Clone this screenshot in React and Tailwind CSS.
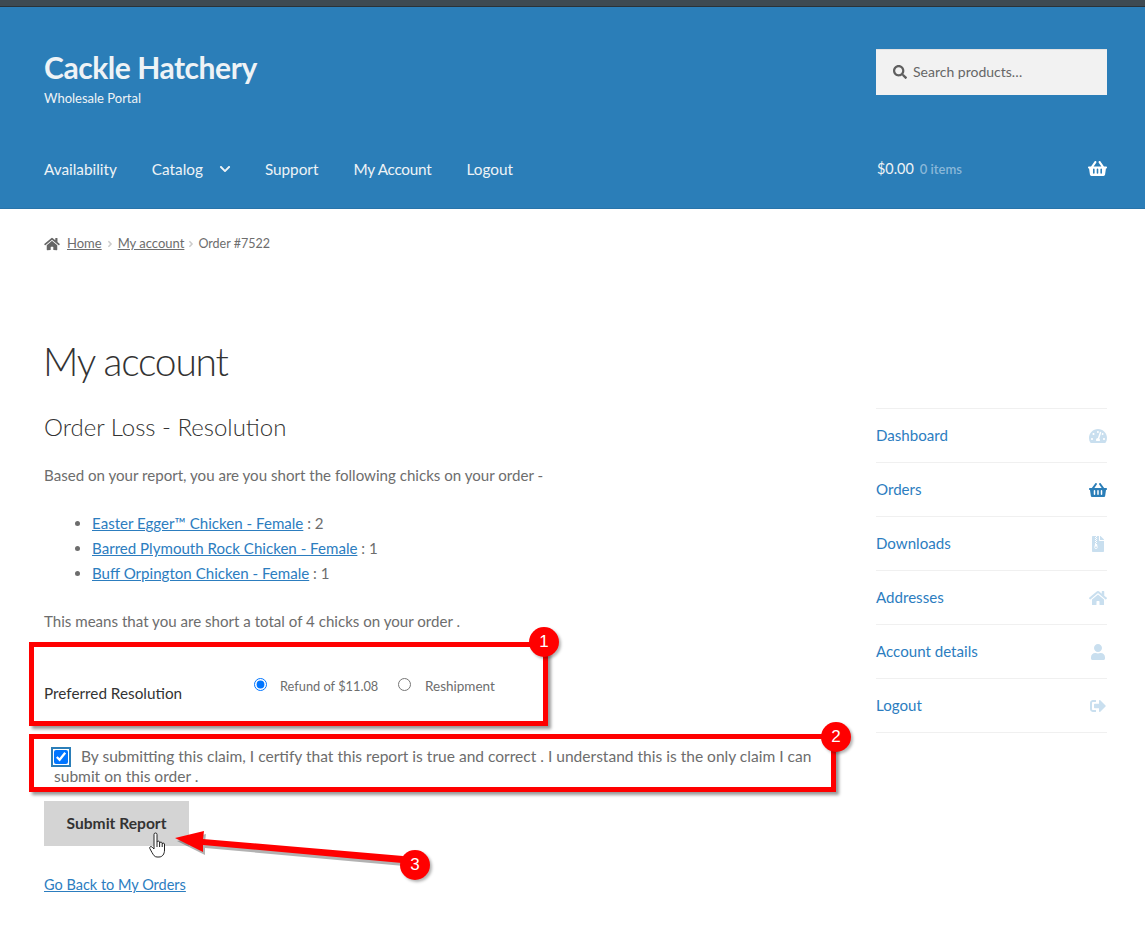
import React from 'react';
import { FaHome, FaSearch, FaShoppingBasket, FaTachometerAlt, FaFileArchive, FaUser, FaSignOutAlt, FaChevronDown, FaAngleRight } from 'react-icons/fa';

const navLinks = ['Availability', 'Catalog', 'Support', 'My Account', 'Logout'];

const accountLinks = [
  { name: 'Dashboard', Icon: FaTachometerAlt },
  { name: 'Orders', Icon: FaShoppingBasket, active: true },
  { name: 'Downloads', Icon: FaFileArchive },
  { name: 'Addresses', Icon: FaHome },
  { name: 'Account details', Icon: FaUser },
  { name: 'Logout', Icon: FaSignOutAlt },
];

const chicks = [
  { name: 'Easter Egger™ Chicken - Female', qty: 2 },
  { name: 'Barred Plymouth Rock Chicken - Female', qty: 1 },
  { name: 'Buff Orpington Chicken - Female', qty: 1 },
];

const Badge = ({ n, className }) => (
  <div className={`absolute w-[30px] h-[30px] rounded-full bg-[#ff0000] text-white flex items-center justify-center text-[17px] font-['Liberation_Sans',sans-serif] shadow-[2px_2px_3px_rgba(0,0,0,0.3)] ${className}`}>
    {n}
  </div>
);

// the red callouts drawn over the screenshot
const Annotations = () => (
  <>
    <div className="absolute left-[29px] top-[642px] w-[519px] h-[84px] border-[5px] border-[#ff0000] shadow-[3px_3px_3px_rgba(0,0,0,0.4)]"></div>
    <div className="absolute left-[29px] top-[734px] w-[807px] h-[58px] border-[5px] border-[#ff0000] shadow-[3px_3px_3px_rgba(0,0,0,0.4)]"></div>
    <Badge n="1" className="left-[529px] top-[627px]" />
    <Badge n="2" className="left-[821px] top-[722px]" />
    <svg className="absolute left-[170px] top-[825px]" width="240" height="45" viewBox="0 0 240 45">
      <polygon points="5,13 34,6 33,14 233,31 232,38 33,20 33,27" fill="#000" opacity="0.3" transform="translate(2 3)" />
      <polygon points="5,13 34,6 33,14 233,31 232,38 33,20 33,27" fill="#ff0000" />
    </svg>
    <Badge n="3" className="left-[400px] top-[850px]" />
    <svg className="absolute left-[149px] top-[832px]" width="17" height="26" viewBox="0 0 17 26" fill="#fff" stroke="#222" strokeWidth="1" strokeLinejoin="round">
      <path d="M5 2.5a1.5 1.5 0 0 1 3 0V10a1.4 1.4 0 0 1 2.6 0v1a1.4 1.4 0 0 1 2.6 0v1a1.2 1.2 0 0 1 2.3 0V18c0 4-2 7-5.5 7H8c-2.5 0-3.5-2-5-4.5L.8 16.5c-.7-1.5 1.2-2.7 2.4-1.3L5 17Z" />
      <path d="M8 10v5M10.6 11v4M13.2 12v3" fill="none" />
    </svg>
  </>
);

export default function App() {
  return (
    <div className="relative min-h-[945px] bg-white text-[#6d6d6d] text-[15.1px] font-['Lato','Noto_Sans',sans-serif] overflow-hidden">
      <div className="h-[7px] bg-[#3e4a52] border-b border-[#2a3238]"></div>

      <header className="h-[202px] bg-[#2b7eb8] border-b border-[#2874aa] pl-[44px] pr-[38px]">
        <div className="flex justify-between h-[130px]">
          <div>
            <div className="mt-[40px] text-[30px] leading-[40px] font-bold text-[#eef3f6] tracking-[-0.45px]">Cackle Hatchery</div>
            <div className="mt-[1px] text-[13px] leading-[20px] text-[#eef3f6]">Wholesale Portal</div>
          </div>
          <div className="mt-[42px] w-[231px] h-[46px] bg-[#f2f2f2] border-t border-[#e2e2e2] flex items-center pl-[17px] pb-[2px] text-[14px] text-[#666]">
            <FaSearch className="w-[14px] h-[14px] mr-[6px] text-[#5f5f5f]" />
            Search products…
          </div>
        </div>
        <div className="flex justify-between items-center h-[64px] text-[#eef3f6]">
          <nav className="flex items-center gap-[35px] text-[15.3px]">
            {navLinks.map(link => (
              <span key={link} className={`flex items-center ${link === 'My Account' ? 'tracking-[-0.25px]' : ''}`}>
                {link}
                {link === 'Catalog' && <FaChevronDown className="w-[12px] h-[12px] ml-[16px] -mr-[1px]" />}
              </span>
            ))}
          </nav>
          <div className="w-[231px] flex items-center">
            <span className="text-[14.4px] ml-[1px]">$0.00</span>
            <span className="ml-[6px] mt-[2px] text-[13px] font-semibold text-[#8ab8d8]">0 items</span>
            <FaShoppingBasket className="ml-auto w-[19px] h-[17px] text-white" />
          </div>
        </div>
      </header>

      <div className="pl-[44px] pr-[38px]">
        <div className="mt-[25px] flex items-center h-[20px] text-[13px]">
          <FaHome className="w-[16px] h-[14px] mr-[7px] text-[#666]" />
          <a className="underline">Home</a>
          <FaAngleRight className="w-[10px] h-[10px] mx-[3px] text-[#ccc]" />
          <a className="underline">My account</a>
          <FaAngleRight className="w-[10px] h-[10px] mx-[2px] text-[#ccc]" />
          <span className="text-[12.5px]">Order #7522</span>
        </div>

        <div className="flex justify-between">
          <main className="w-[786px]">
            <h1 className="mt-[82px] -ml-[1px] text-[39px] leading-[50px] font-light text-[#333] tracking-[-1.2px]">My account</h1>
            <h2 className="mt-[25px] text-[24px] leading-[32px] font-light text-[#333]">Order Loss - Resolution</h2>

            <p className="mt-[20px] leading-[24px]">Based on your report, you are you short the following chicks on your order -</p>

            <ul className="mt-[24px] ml-[48px] list-disc marker:text-[#6d6d6d]">
              {chicks.map(c => (
                <li key={c.name} className="leading-[25px]">
                  <a className="text-[#2c7dbf] underline">{c.name}</a> : {c.qty}
                </li>
              ))}
            </ul>

            <p className="mt-[23px] leading-[24px]">This means that you are short a total of 4 chicks on your order .</p>

            <div className="mt-[43px] flex h-[40px]">
              <label className="w-[210px] pt-[5px] leading-[24px] text-[15.3px] text-[#333]">Preferred Resolution</label>
              <div className="flex items-start leading-[20px]">
                <input type="radio" name="resolution" defaultChecked className="w-[13px] h-[13px] mt-[2px] ml-0 mr-[13px]" />
                <span className="w-[118px] text-[12.8px]">Refund of $11.08</span>
                <input type="radio" name="resolution" className="w-[13px] h-[13px] mt-[2px] mr-[14px]" />
                <span className="text-[13.5px]">Reshipment</span>
              </div>
            </div>

            <p className="mt-[30px] pl-[10px] leading-[20px] text-[15.55px]">
              <input type="checkbox" defaultChecked className="w-[14px] h-[14px] mr-[13px] align-[-2px] outline-2 outline-offset-[1px] outline-[#2b7eb8]" />
              By submitting this claim, I certify that this report is true and correct . I understand this is the only claim I can submit on this order .
            </p>

            <button className="mt-[15px] block w-[145px] h-[45px] bg-[#d4d4d4] text-[#333] text-[15.6px] font-bold">Submit Report</button>

            <a className="mt-[27px] block leading-[24px] text-[14.5px] text-[#2c7dbf] underline">Go Back to My Orders</a>
          </main>

          <aside className="w-[231px] mt-[154px] self-start border-t border-[#f0f0f0]">
            {accountLinks.map(({ name, Icon, active }) => (
              <div key={name} className="h-[54px] border-b border-[#f0f0f0] flex items-center justify-between text-[#2c7dbf]">
                <span>{name}</span>
                <Icon className={`w-[18px] h-[16px] ${active ? 'text-[#2b7eb8]' : 'text-[#c9dfef]'}`} />
              </div>
            ))}
          </aside>
        </div>
      </div>

      <Annotations />
    </div>
  );
}
